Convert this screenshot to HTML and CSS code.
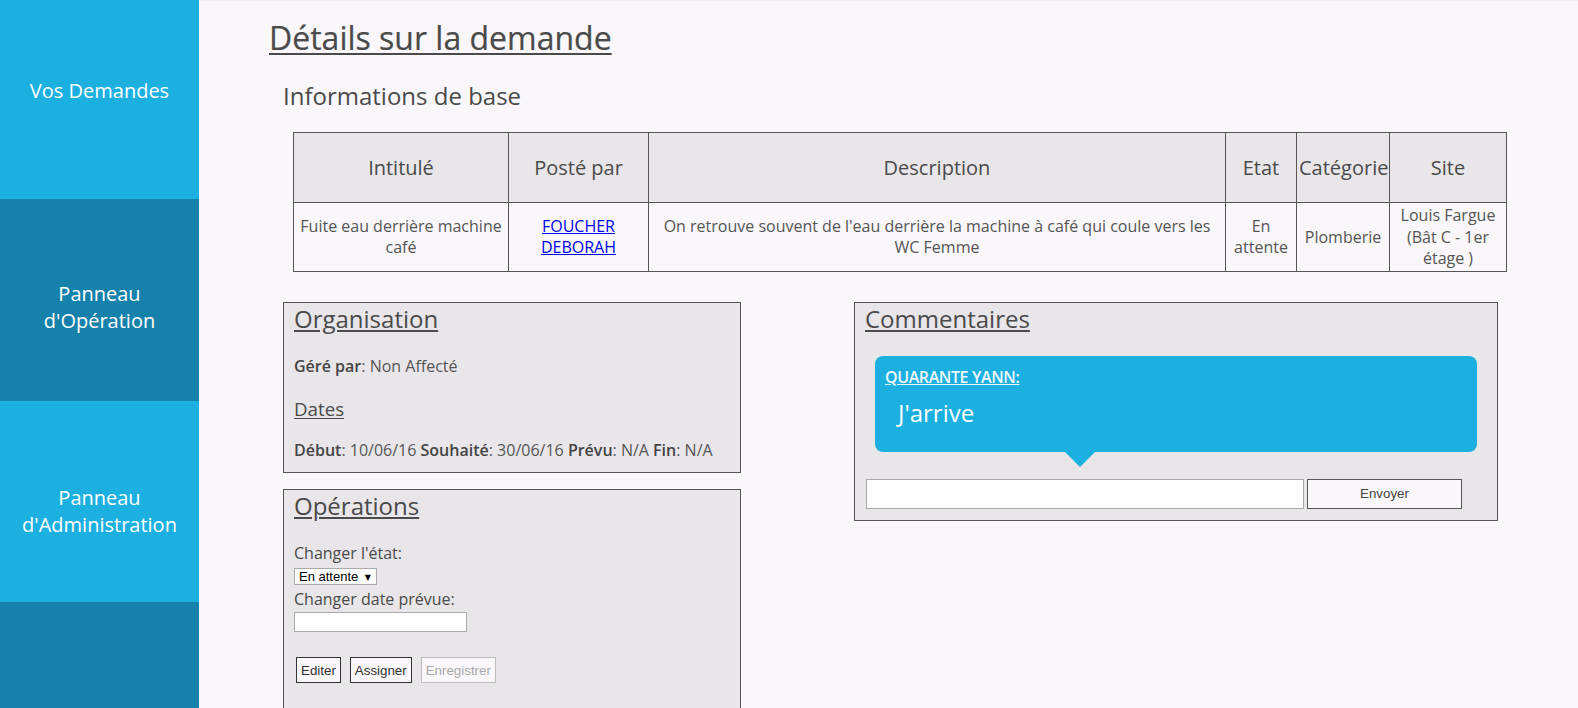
FILE: index.html
```html
<!DOCTYPE html>
<html lang="fr">
<head>
<meta charset="utf-8">
<title>Détails sur la demande</title>
<link rel="stylesheet" href="styles.css">
</head>
<body>
<div class="app">
  <nav class="sidebar">
    <a class="nav-item nav-item--light nav-item--first" href="#">Vos Demandes</a>
    <a class="nav-item nav-item--dark nav-item--second" href="#">Panneau<br>d'Opération</a>
    <a class="nav-item nav-item--light nav-item--third" href="#">Panneau<br>d'Administration</a>
    <a class="nav-item nav-item--dark nav-item--fill" href="#"></a>
  </nav>
  <main class="main">
    <h1 class="page-title">Détails sur la demande</h1>
    <h2 class="section-title">Informations de base</h2>
    <table class="info-table">
      <colgroup>
        <col class="c-intitule"><col class="c-poste"><col class="c-desc"><col class="c-etat"><col class="c-cat"><col class="c-site">
      </colgroup>
      <thead>
        <tr>
          <th>Intitulé</th><th>Posté par</th><th>Description</th><th>Etat</th><th>Catégorie</th><th>Site</th>
        </tr>
      </thead>
      <tbody>
        <tr>
          <td>Fuite eau derrière machine café</td>
          <td><a class="user-link" href="#">FOUCHER DEBORAH</a></td>
          <td>On retrouve souvent de l'eau derrière la machine à café qui coule vers les WC Femme</td>
          <td>En attente</td>
          <td>Plomberie</td>
          <td>Louis Fargue (Bât C - 1er étage )</td>
        </tr>
      </tbody>
    </table>

    <div class="panels">
      <div class="col-left">
        <section class="box box--org">
          <h2 class="box-title">Organisation</h2>
          <p class="line"><span class="lbl">Géré par</span>: Non Affecté</p>
          <h3 class="sub-title">Dates</h3>
          <p class="line"><span class="lbl">Début</span>: 10/06/16 <span class="lbl">Souhaité</span>: 30/06/16 <span class="lbl">Prévu</span>: N/A <span class="lbl">Fin</span>: N/A</p>
        </section>
        <section class="box box--ops">
          <h2 class="box-title">Opérations</h2>
          <label class="field-label" for="etat">Changer l'état:</label>
          <span class="select-wrap"><select id="etat" class="state-select"><option>En attente</option></select></span>
          <label class="field-label field-label--date" for="date">Changer date prévue:</label>
          <input id="date" class="date-input" type="text">
          <div class="btn-row">
            <button class="btn" type="button">Editer</button>
            <button class="btn" type="button">Assigner</button>
            <button class="btn" type="button" disabled>Enregistrer</button>
          </div>
        </section>
      </div>

      <section class="box box--comments">
        <h2 class="box-title">Commentaires</h2>
        <div class="bubble">
          <div class="bubble-author">QUARANTE YANN:</div>
          <div class="bubble-text">J'arrive</div>
        </div>
        <div class="comment-form">
          <input class="comment-input" type="text">
          <button class="send-btn" type="button">Envoyer</button>
        </div>
      </section>
    </div>
  </main>
</div>
</body>
</html>
```
FILE: styles.css
```css
* { box-sizing: border-box; }

html, body {
  margin: 0;
  padding: 0;
}

body {
  font-family: "Open Sans", "DejaVu Sans", sans-serif;
  font-size: 16px;
  color: #555;
  background: #f9f7f9;
}

.app {
  display: flex;
  min-height: 100vh;
}

/* Sidebar */
.sidebar {
  width: 199px;
  flex: 0 0 199px;
  display: flex;
  flex-direction: column;
}

.nav-item {
  display: block;
  color: #fff;
  text-decoration: none;
  text-align: center;
  font-size: 20px;
  line-height: 27.2px;
}

.nav-item--light { background: #1cb0e1; }
.nav-item--dark { background: #1681ab; }

.nav-item--first { height: 199px; padding-top: 77px; }
.nav-item--second { height: 202px; padding-top: 81px; }
.nav-item--third { height: 201px; padding-top: 83px; }
.nav-item--fill { flex: 1; }

/* Main */
.main {
  flex: 1;
  padding: 16px 0 0 70px;
  border-top: 1px solid #f1eff1;
}

.page-title {
  margin: -1px 0 0 0;
  font-size: 32px;
  font-weight: normal;
  line-height: 43.6px;
  color: #4a4a4a;
  text-decoration: underline;
  text-underline-offset: 3px;
  text-decoration-thickness: 2px;
  -webkit-text-stroke: 0.2px #4a4a4a;
}

.section-title {
  margin: 20px 0 0 14px;
  font-size: 24px;
  font-weight: normal;
  line-height: 32.7px;
  color: #4a4a4a;
}

/* Table */
.info-table {
  margin: 20px 0 0 24px;
  width: 1213px;
  table-layout: fixed;
  border-collapse: collapse;
  color: #555;
}

.c-intitule { width: 215px; }
.c-poste { width: 140px; }
.c-desc { width: 577px; }
.c-etat { width: 71px; }
.c-cat { width: 93px; }
.c-site { width: 117px; }

.info-table th,
.info-table td {
  border: 1px solid #555;
  text-align: center;
  padding: 1px 2px;
}

.info-table th {
  height: 70px;
  background: #e8e6e9;
  font-size: 20px;
  font-weight: normal;
  color: #4a4a4a;
}

.info-table td {
  height: 69px;
  font-size: 16px;
  line-height: 21.5px;
}

.user-link {
  color: #0000ee;
  text-decoration: underline;
}

/* Panels */
.panels {
  display: flex;
  align-items: flex-start;
  gap: 113px;
  margin: 30px 0 0 14px;
}

.col-left {
  width: 458px;
  display: flex;
  flex-direction: column;
  gap: 16px;
}

.box {
  border: 1px solid #555;
  background: #e8e6e9;
  padding: 0 10px;
}

.box--org { padding-bottom: 10px; }
.box--ops { padding-bottom: 60px; }
.box--comments { width: 644px; padding-bottom: 11px; }

.box-title {
  margin: 0 0 20px 0;
  font-size: 24px;
  font-weight: normal;
  line-height: 32.7px;
  color: #4a4a4a;
  text-decoration: underline;
  text-underline-offset: 2px;
}

.line {
  margin: 0;
  font-size: 16px;
  line-height: 21.8px;
  color: #555;
}

.lbl {
  font-weight: 600;
  color: #444;
}

.sub-title {
  margin: 18px 0 19px 0;
  font-size: 18.72px;
  font-weight: normal;
  line-height: 25.5px;
  color: #4a4a4a;
  text-decoration: underline;
  text-underline-offset: 2px;
}

/* Operations form */
.field-label {
  display: block;
  font-size: 16px;
  line-height: 21.8px;
  color: #4a4a4a;
}

.field-label--date { margin-top: 2px; }

.select-wrap {
  position: relative;
  display: inline-block;
  margin-top: 3px;
  vertical-align: top;
}

.select-wrap::after {
  content: "▼";
  position: absolute;
  right: 6px;
  top: 4px;
  font-size: 8px;
  line-height: 10px;
  color: #000;
  pointer-events: none;
}

.state-select {
  -webkit-appearance: none;
  appearance: none;
  display: block;
  width: 83px;
  height: 17px;
  padding: 0 0 0 4px;
  border: 1px solid #a9a9a9;
  border-radius: 0;
  background: #fff;
  font-family: "Liberation Sans", Arial, sans-serif;
  font-size: 13px;
  line-height: 15px;
  color: #000;
}

.date-input {
  display: block;
  margin-top: 2px;
  width: 173px;
  height: 20px;
  border: 1px solid #a9a9a9;
  background: #fff;
  padding: 0 2px;
}

.btn-row {
  display: flex;
  gap: 9px;
  margin: 25px 0 0 2px;
}

.btn {
  height: 26px;
  padding: 0 4px;
  border: 1px solid #333;
  background: #f9f7f9;
  font-family: "Liberation Sans", Arial, sans-serif;
  font-size: 13.33px;
  color: #333;
}

.btn:disabled {
  border-color: #bbb;
  color: #aaa;
}

/* Comments */
.bubble {
  position: relative;
  margin: 0 10px;
  padding: 11px 10px 22px;
  background: #1cb0e1;
  border-radius: 8px;
  color: #fff;
}

.bubble::after {
  content: "";
  position: absolute;
  left: 190px;
  bottom: -15px;
  border-left: 15px solid transparent;
  border-right: 15px solid transparent;
  border-top: 15px solid #1cb0e1;
}

.bubble-author {
  font-size: 16px;
  line-height: 21.8px;
  font-weight: 600;
  letter-spacing: -0.4px;
  color: #eef8fc;
  text-decoration: underline;
}

.bubble-text {
  margin: 8px 0 0 13px;
  font-size: 24px;
  line-height: 32.7px;
  color: #fff;
}

.comment-form {
  display: flex;
  gap: 3px;
  margin: 27px 0 0 1px;
}

.comment-input {
  width: 438px;
  height: 30px;
  border: 1px solid #aaa;
  background: #fff;
}

.send-btn {
  width: 155px;
  height: 30px;
  border: 1px solid #555;
  background: #f9f7f9;
  font-family: "Liberation Sans", Arial, sans-serif;
  font-size: 13.33px;
  color: #444;
}
```
